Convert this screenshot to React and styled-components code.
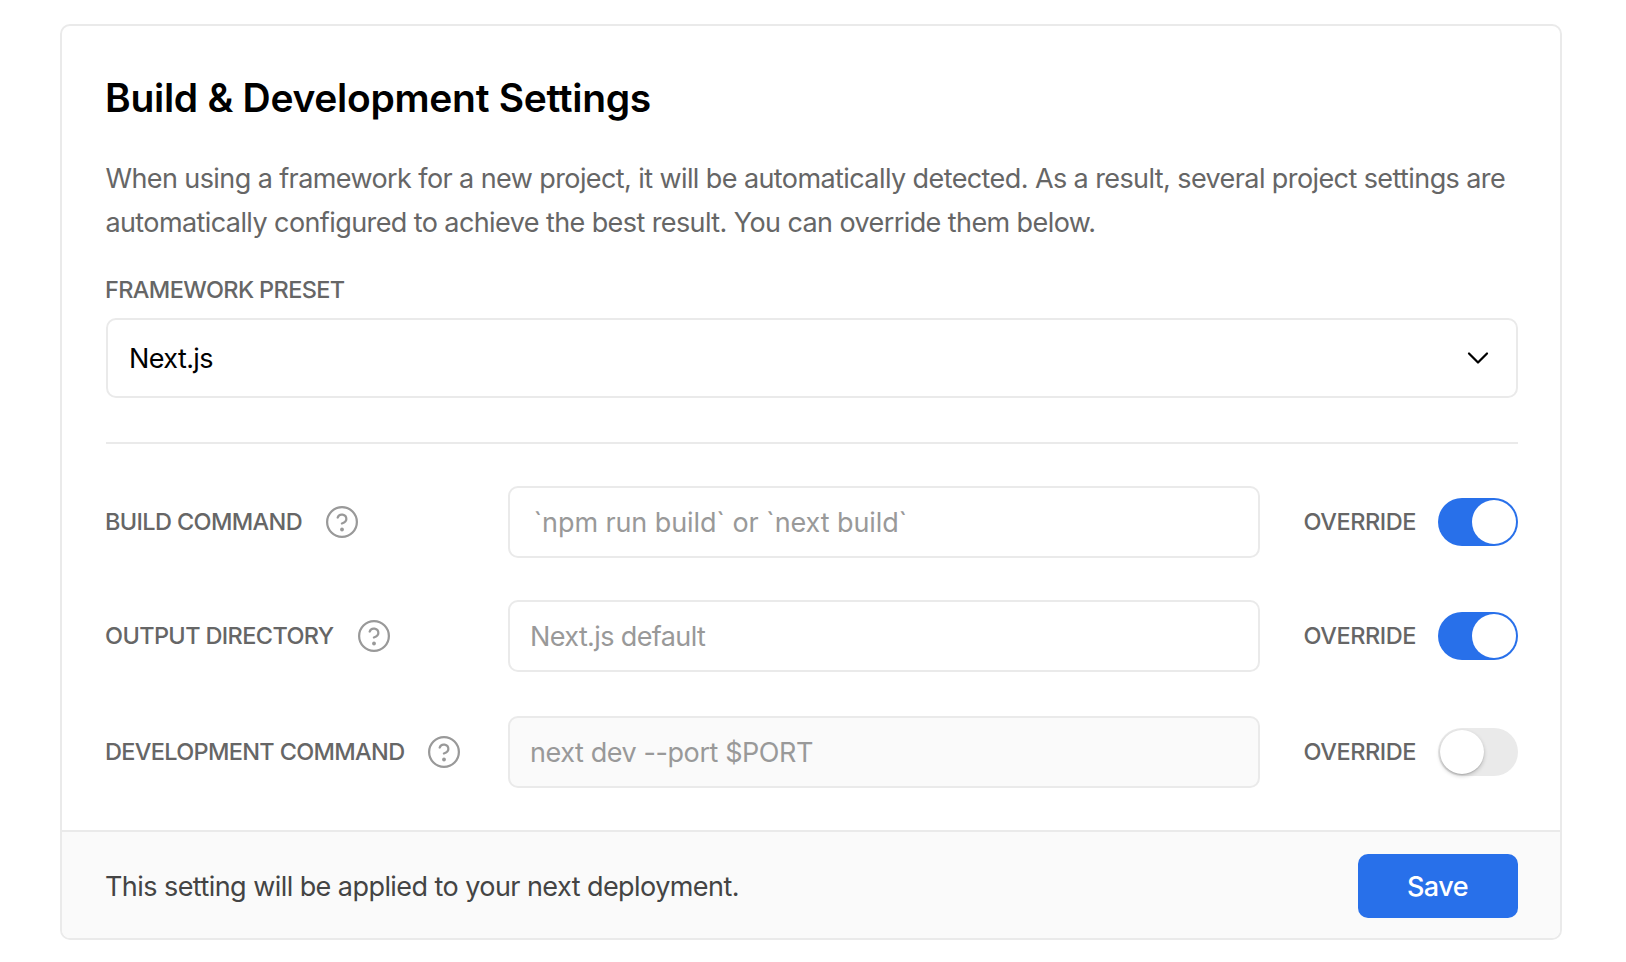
import React, { useState } from "react";
import styled, { createGlobalStyle } from "styled-components";

const GlobalStyle = createGlobalStyle`
  *, *::before, *::after { box-sizing: border-box; }
  body {
    margin: 0;
    background: #fff;
    color: #000;
    font-family: Inter, "Liberation Sans", sans-serif;
    -webkit-font-smoothing: antialiased;
  }
`;

const Page = styled.main`
  padding: 24px 64px 22px 60px;
`;

const Card = styled.form`
  border: 2px solid #eaeaea;
  border-radius: 10px;
  overflow: hidden;
  background: #fff;
`;

const Body = styled.div`
  padding: 44px 42px 42px 44px;
`;

const Title = styled.h1`
  margin: 0 0 0 -1px;
  font-size: 39px;
  font-weight: 600;
  line-height: 56px;
  letter-spacing: -0.29px;
`;

const Description = styled.p`
  margin: 31px -20px 26px -0.6px;
  font-size: 27px;
  line-height: 44px;
  letter-spacing: -0.59px;
  color: #666;
`;

const Line = styled.span`
  display: block;
  white-space: nowrap;
`;

const Label = styled.span`
  display: block;
  margin-left: -1px;
  font-size: 23.5px;
  font-weight: 450;
  line-height: 37px;
  letter-spacing: ${(p) => p.$spacing || -0.63}px;
  text-transform: uppercase;
  white-space: nowrap;
  color: #666;
`;

const Select = styled.button`
  display: flex;
  align-items: center;
  justify-content: space-between;
  width: 100%;
  height: 80px;
  margin-top: 10px;
  padding: 0 20px 0 21px;
  border: 2px solid #eaeaea;
  border-radius: 10px;
  background: #fff;
  color: #000;
  font: 400 27px/44px Inter, "Liberation Sans", sans-serif;
  letter-spacing: -0.6px;
`;

const SelectValue = styled.span`
  padding-top: 2px;
`;

const Divider = styled.hr`
  height: 2px;
  margin: 44px 0 42px;
  border: 0;
  background: #eaeaea;
`;

const Rows = styled.div`
  display: flex;
  flex-direction: column;
  gap: 42px;
`;

const Row = styled.div`
  display: grid;
  grid-template-columns: 402px 752px 1fr;
  align-items: center;
  height: 72px;

  &:last-child { margin-top: 2px; }

  ${Label} { padding-bottom: 2px; }
`;

const RowLabel = styled.div`
  display: flex;
  align-items: center;
  gap: 24px;
`;

const HelpIcon = styled.svg`
  display: block;
  flex: none;
  color: #999;
`;

const Input = styled.input`
  width: 100%;
  height: 72px;
  padding: 0 ${(p) => p.$inset || 20}px;
  border: 2px solid #eaeaea;
  border-radius: 10px;
  outline: 0;
  background: #fff;
  font: 400 27px/44px Inter, "Liberation Sans", sans-serif;
  letter-spacing: ${(p) => p.$spacing}px;

  &::placeholder { color: #999; opacity: 1; }
  &:disabled { background: #fafafa; }
`;

const Override = styled.div`
  display: flex;
  align-items: center;
  justify-content: flex-end;
  gap: 22px;
`;

const Toggle = styled.button`
  display: flex;
  align-items: center;
  justify-content: ${(p) => (p.$on ? "flex-end" : "flex-start")};
  width: 80px;
  height: 48px;
  padding: 2px;
  border: 0;
  border-radius: 24px;
  background: ${(p) => (p.$on ? "#2870ea" : "#eaeaea")};
`;

const Knob = styled.span`
  width: 44px;
  height: 44px;
  border-radius: 50%;
  background: #fff;
  box-shadow: ${(p) => (p.$on ? "none" : "0 2px 4px rgba(0, 0, 0, 0.2), 0 1px 1px rgba(0, 0, 0, 0.12)")};
`;

const Footer = styled.footer`
  display: flex;
  align-items: center;
  justify-content: space-between;
  padding: 22px 42px 20px 43px;
  border-top: 2px solid #eaeaea;
  background: #fafafa;
`;

const Note = styled.p`
  margin: 0;
  padding-top: 2px;
  font-size: 27px;
  line-height: 44px;
  letter-spacing: -0.56px;
  color: #444;
`;

const SaveButton = styled.button`
  width: 160px;
  height: 64px;
  padding: 2px 1px 0 0;
  border: 0;
  border-radius: 10px;
  background: #2870ea;
  color: #fff;
  font: 450 27px/44px Inter, "Liberation Sans", sans-serif;
  letter-spacing: -0.5px;
`;

const settings = [
  { label: "Build Command", spacing: -0.63, hint: "`npm run build` or `next build`", hintSpacing: -0.1, inset: 23.5, on: true },
  { label: "Output Directory", spacing: -0.62, hint: "Next.js default", hintSpacing: -0.62, on: true },
  { label: "Development Command", spacing: -0.67, hint: "next dev --port $PORT", hintSpacing: -0.42, on: false },
];

function Help() {
  return (
    <HelpIcon width="32" height="32" viewBox="1.25 1.25 21.5 21.5" fill="none" stroke="currentColor" strokeWidth="1.5" strokeLinecap="round" strokeLinejoin="round">
      <circle cx="12" cy="12" r="10" />
      <path d="M9.09 9a3 3 0 0 1 5.83 1c0 2-3 3-3 3" />
      <circle cx="12" cy="17" r="1.3" fill="currentColor" stroke="none" />
    </HelpIcon>
  );
}

function Chevron() {
  return (
    <svg width="36" height="36" viewBox="0 0 24 24" fill="none" stroke="currentColor" strokeWidth="1.5" strokeLinecap="round" strokeLinejoin="round">
      <path d="M6 9l6 6 6-6" />
    </svg>
  );
}

function SettingRow({ item }) {
  const [on, setOn] = useState(item.on);
  return (
    <Row>
      <RowLabel>
        <Label $spacing={item.spacing}>{item.label}</Label>
        <Help />
      </RowLabel>
      <Input placeholder={item.hint} disabled={!on} $spacing={item.hintSpacing} $inset={item.inset} />
      <Override>
        <Label $spacing={-0.45}>Override</Label>
        <Toggle type="button" role="switch" aria-checked={on} aria-label={`Override ${item.label}`} $on={on} onClick={() => setOn(!on)}>
          <Knob $on={on} />
        </Toggle>
      </Override>
    </Row>
  );
}

export default function App() {
  return (
    <Page>
      <GlobalStyle />
      <Card onSubmit={(e) => e.preventDefault()}>
        <Body>
          <Title>Build &amp; Development Settings</Title>
          <Description>
            <Line>When using a framework for a new project, it will be automatically detected. As a result, several project settings are</Line>
            <Line>automatically configured to achieve the best result. You can override them below.</Line>
          </Description>
          <Label>Framework Preset</Label>
          <Select type="button">
            <SelectValue>Next.js</SelectValue>
            <Chevron />
          </Select>
          <Divider />
          <Rows>
            {settings.map((item) => (
              <SettingRow key={item.label} item={item} />
            ))}
          </Rows>
        </Body>
        <Footer>
          <Note>This setting will be applied to your next deployment.</Note>
          <SaveButton type="submit">Save</SaveButton>
        </Footer>
      </Card>
    </Page>
  );
}
